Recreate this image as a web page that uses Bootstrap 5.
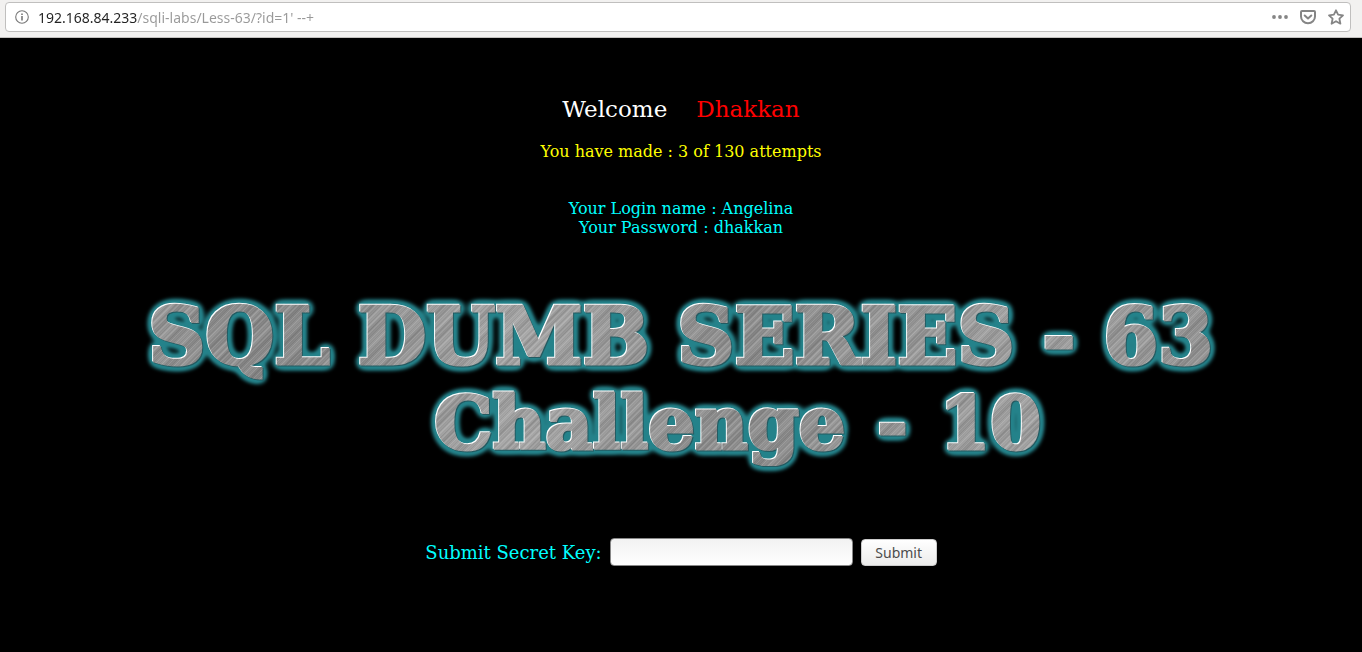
<!DOCTYPE html>
<html lang="en">
<head>
<meta charset="utf-8">
<meta name="viewport" content="width=device-width, initial-scale=1">
<title>SQL Dumb Series - 63</title>
<link href="https://cdn.jsdelivr.net/npm/bootstrap@5.3.0/dist/css/bootstrap.min.css" rel="stylesheet">
<style>
  body { background: #000; font-family: "DejaVu Serif", serif; }
  .toolbar { background: #f2f1f0; border-bottom: 1px solid #c4c2c0; padding: 2px 11px 5px 5px; }
  .address { height: 30px; border: 1px solid #c0bfbe; border-radius: 4px; background: #fff; padding: 0 6px 0 9px; gap: 9px; }
  .address-input {
    border: 0; outline: 0; padding: 0; height: 28px;
    font: 14px "Noto Sans", sans-serif; color: transparent; caret-color: #333;
    background: linear-gradient(90deg, #222 99px, #999 99px);
    -webkit-background-clip: text; background-clip: text;
  }
  .tool { width: 16px; height: 16px; color: #858585; line-height: 0; }
  .welcome { font-size: 23px; line-height: 28px; gap: 29px; color: #fff; margin-top: 57px; }
  .user { color: #f00; }
  .attempts { color: #ff0; font-size: 16px; line-height: 19px; margin-top: 19px; }
  .login { color: #0ff; font-size: 16px; line-height: 19px; margin-top: 38px; }
  .banner { padding-top: 57px; }
  .metal {
    font: bold 79px/86px "DejaVu Serif", serif; margin: 0; color: transparent; white-space: nowrap;
    -webkit-text-stroke: 3px transparent;
    background:
      repeating-linear-gradient(135deg, #fff2 0 1px, #0000 1px 3px, #0001 3px 4px, #0000 4px 5px),
      repeating-linear-gradient(135deg, #fff1 0 3px, #0001 7px 8px, #fff1 17px),
      linear-gradient(100deg, #a0a0a0, #888 20%, #a4a4a4 38%, #8b8b8b 55%, #a0a0a0 75%, #858585);
    -webkit-background-clip: text; background-clip: text;
    filter: url(#bevel-glow);
  }
  .metal-top { gap: 28px; }
  .metal-sub { gap: 32px; padding-left: 114px; font-size: 73px; }
  .key-form { color: #0ff; font-size: 18px; margin-top: 72px; gap: 8px; }
  .key-input { width: 243px; height: 28px; border: 1px solid #888; border-radius: 4px; background: linear-gradient(#f2f2f2, #fff); }
  .key-btn { width: 76px; height: 27px; padding: 0; border: 1px solid #ccc; border-radius: 4px; background: linear-gradient(#fff, #ececeb); color: #4c4c4c; font: 14px "Noto Sans", sans-serif; }
</style>
</head>
<body>
<svg width="0" height="0" class="position-absolute" aria-hidden="true">
  <filter id="bevel-glow" x="-5%" y="-30%" width="110%" height="160%" color-interpolation-filters="sRGB">
    <feGaussianBlur in="SourceAlpha" stdDeviation="4" result="soft"/>
    <feComponentTransfer in="soft" result="halo"><feFuncA type="linear" slope="6" intercept="-0.15"/></feComponentTransfer>
    <feGaussianBlur in="halo" stdDeviation="1" result="haloEdge"/>
    <feFlood flood-color="#24828a"/>
    <feComposite in2="haloEdge" operator="in" result="glow"/>
    <feOffset in="SourceAlpha" dx="1" dy="1" result="shadowShape"/>
    <feFlood flood-color="#244a50" flood-opacity="0.7"/>
    <feComposite in2="shadowShape" operator="in" result="shadow"/>
    <feOffset in="SourceAlpha" dx="-1" dy="-1" result="lightShape"/>
    <feFlood flood-color="#fff"/>
    <feComposite in2="lightShape" operator="in" result="light"/>
    <feMerge><feMergeNode in="glow"/><feMergeNode in="shadow"/><feMergeNode in="light"/><feMergeNode in="SourceGraphic"/></feMerge>
  </filter>
</svg>

<header class="toolbar">
  <div class="address d-flex align-items-center">
    <svg width="14" height="14" viewBox="0 0 14 14" fill="none" stroke="#777" class="flex-shrink-0" aria-hidden="true"><circle cx="7" cy="7" r="6.3" stroke-width="1.1"/><path d="M7 6v4.5M7 3.4v1.5" stroke-width="1.6"/></svg>
    <input class="address-input flex-grow-1" type="text" aria-label="Address" value="192.168.84.233/sqli-labs/Less-63/?id=1' --+" spellcheck="false">
    <div class="d-flex gap-2">
      <button class="btn border-0 p-0 tool me-1" type="button" aria-label="Page actions"><svg width="16" height="16" viewBox="0 0 16 16" fill="currentColor"><circle cx="2" cy="8" r="1.9"/><circle cx="8" cy="8" r="1.9"/><circle cx="14" cy="8" r="1.9"/></svg></button>
      <button class="btn border-0 p-0 tool me-1" type="button" aria-label="Save to Pocket"><svg width="16" height="16" viewBox="0 0 16 16" fill="none" stroke="currentColor" stroke-width="2" stroke-linecap="round" stroke-linejoin="round"><path d="M2 2h12a1 1 0 0 1 1 1v4.500a7 6.700 0 0 1-14 0V3a1 1 0 0 1 1-1z"/><path d="M4.700 6.500 8 9.500l3.300-3"/></svg></button>
      <button class="btn border-0 p-0 tool" type="button" aria-label="Bookmark this page"><svg width="16" height="16" viewBox="0 0 16 16" fill="none" stroke="currentColor" stroke-width="1.800" stroke-linejoin="round"><path d="M8 1.300 10.100 5.700 15 6.300 11.400 9.700 12.400 14.700 8 12.200 3.600 14.700 4.600 9.700 1 6.300 5.900 5.700z"/></svg></button>
    </div>
  </div>
</header>

<main class="container-fluid text-center">
  <div class="welcome d-flex justify-content-center"><span>Welcome</span><span class="user">Dhakkan</span></div>
  <p class="attempts mb-0">You have made : 3 of 130 attempts</p>
  <p class="login mb-0">Your Login name : Angelina<br>Your Password : dhakkan</p>
  <div class="banner">
    <h1 class="metal metal-top d-flex justify-content-center"><span>SQL</span><span>DUMB</span><span>SERIES</span><span>-</span><span>63</span></h1>
    <h2 class="metal metal-sub d-flex justify-content-center"><span>Challenge</span><span>-</span><span>10</span></h2>
  </div>
  <form class="key-form d-flex justify-content-center align-items-center">
    <label for="key">Submit Secret Key:</label>
    <input class="key-input" type="text" id="key" name="key">
    <button class="btn key-btn" type="submit">Submit</button>
  </form>
</main>
<script src="https://cdn.jsdelivr.net/npm/bootstrap@5.3.0/dist/js/bootstrap.bundle.min.js"></script>
</body>
</html>
